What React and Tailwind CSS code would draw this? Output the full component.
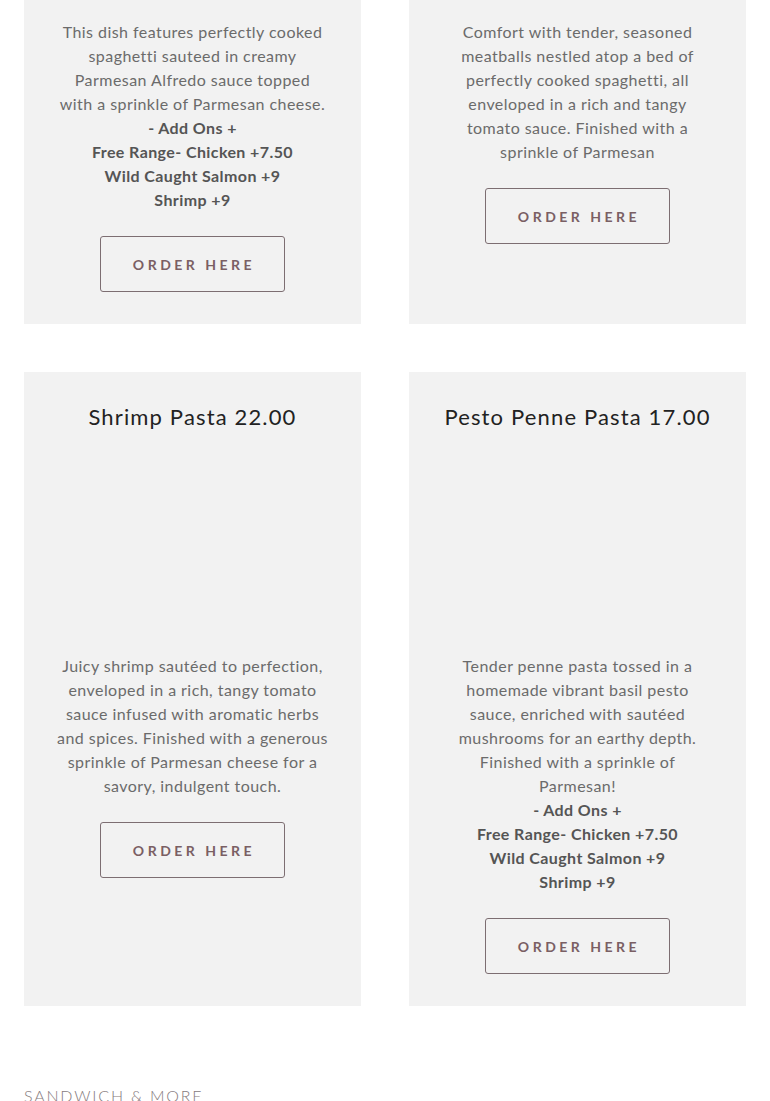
import React from 'react';

const addOns = ['- Add Ons +', 'Free Range- Chicken +7.50', 'Wild Caught Salmon +9', 'Shrimp +9'];

function OrderButton() {
    return (
        <button className="mt-6 h-14 w-[185px] rounded-[3px] border border-[#7d6e72] text-[14px] font-bold tracking-[3.5px] text-[#7a5f64] pl-[3px]">
            ORDER HERE
        </button>
    );
}

function Card({ title, lines, withAddOns, top }) {
    return (
        <div className={`bg-[#f2f2f2] flex flex-col items-center px-6 pb-8 ${top ? 'pt-5' : 'pt-[29px]'}`}>
            {title && (
                <>
                    <h3 className="text-[22px] leading-8 tracking-[1.15px] text-[#222]">{title}</h3>
                    <div className="h-[221px]" />
                </>
            )}
            <p className="text-[16px] leading-6 tracking-[0.45px] text-[#6b6b6b] text-center">
                {lines.map((line, i) => (
                    <span key={i} className="block">{line}</span>
                ))}
            </p>
            {withAddOns && (
                <div className="text-[16px] leading-6 tracking-[0.4px] font-bold text-[#555] text-center">
                    {addOns.map(line => <p key={line}>{line}</p>)}
                </div>
            )}
            <OrderButton />
        </div>
    );
}

export default function App() {
    return (
        <div className="bg-white px-6 min-h-[1101px] font-['Lato',sans-serif]">
            <div className="grid grid-cols-2 gap-12">
                <Card top withAddOns lines={[
                    'This dish features perfectly cooked',
                    'spaghetti sauteed in creamy',
                    'Parmesan Alfredo sauce topped',
                    'with a sprinkle of Parmesan cheese.',
                ]} />
                <Card top lines={[
                    'Comfort with tender, seasoned',
                    'meatballs nestled atop a bed of',
                    'perfectly cooked spaghetti, all',
                    'enveloped in a rich and tangy',
                    'tomato sauce. Finished with a',
                    'sprinkle of Parmesan',
                ]} />
            </div>
            <div className="grid grid-cols-2 gap-12 mt-12">
                <Card title="Shrimp Pasta 22.00" lines={[
                    'Juicy shrimp sautéed to perfection,',
                    'enveloped in a rich, tangy tomato',
                    'sauce infused with aromatic herbs',
                    'and spices. Finished with a generous',
                    'sprinkle of Parmesan cheese for a',
                    'savory, indulgent touch.',
                ]} />
                <Card title="Pesto Penne Pasta 17.00" withAddOns lines={[
                    'Tender penne pasta tossed in a',
                    'homemade vibrant basil pesto',
                    'sauce, enriched with sautéed',
                    'mushrooms for an earthy depth.',
                    'Finished with a sprinkle of',
                    'Parmesan!',
                ]} />
            </div>
            <h2 className="mt-[78px] text-[16px] leading-6 tracking-[1.8px] font-light text-[#857a7d]">SANDWICH &amp; MORE</h2>
        </div>
    );
}
